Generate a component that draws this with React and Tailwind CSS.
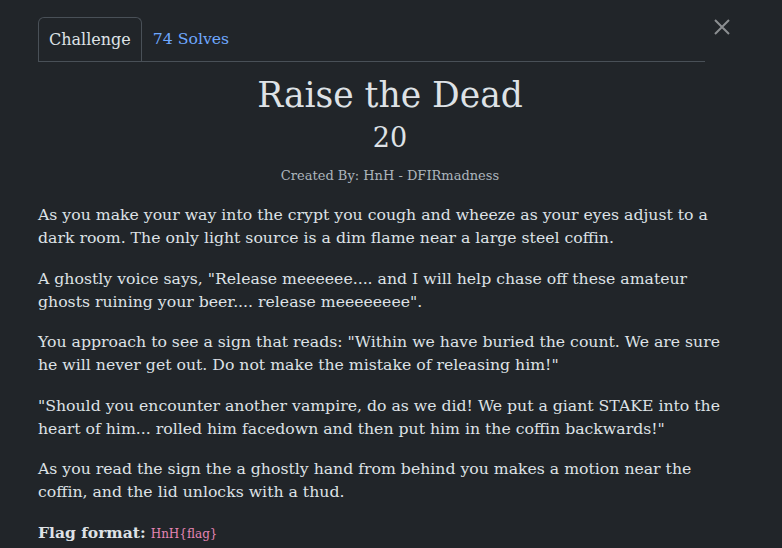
export default function App() {
  return (
    <div className="w-[782px] h-[548px] overflow-hidden bg-[#212529] text-[#dee2e6] px-[38px] pt-[17px] font-['DejaVu_Serif',serif]">
      <div className="flex items-start">
        <div className="w-[667px] flex border-b border-[#495057]">
          <div className="h-[44px] -mb-px px-[10px] flex items-center border border-b-0 border-[#495057] rounded-t-[6px] bg-[#212529] text-[16px] text-[#dee2e6]">
            Challenge
          </div>
          <div className="h-[44px] px-[11px] flex items-center text-[15.7px] text-[#6ea8fe]">
            74 Solves
          </div>
        </div>
        <button className="ml-[9px] mt-[2px] w-[16px] h-[16px] text-[#8b8e91]" aria-label="Close">
          <svg width="16" height="16" viewBox="0 0 16 16" fill="none" stroke="currentColor" strokeWidth="2">
            <path d="M1 1 L15 15 M15 1 L1 15" />
          </svg>
        </button>
      </div>
      <div className="w-[704px]">
        <h1 className="mt-[14px] text-center text-[34.5px] leading-[38px] text-[#dee2e6]">Raise the Dead</h1>
        <div className="mt-[8px] text-center text-[27px] leading-[32px] text-[#dee2e6]">20</div>
        <div className="mt-[13px] text-center text-[13px] leading-[18px] text-[#adb5bd]">
          Created By: HnH - DFIRmadness
        </div>
        <div className="mt-[18px] text-[15.7px] leading-[23px] text-[#dee2e6] whitespace-nowrap">
          <p className="mb-[17.6px]">
            As you make your way into the crypt you cough and wheeze as your eyes adjust to a<br />
            dark room. The only light source is a dim flame near a large steel coffin.
          </p>
          <p className="mb-[17.6px]">
            A ghostly voice says, "Release meeeeee.... and I will help chase off these amateur<br />
            ghosts ruining your beer.... release meeeeeeee".
          </p>
          <p className="mb-[17.6px]">
            You approach to see a sign that reads: "Within we have buried the count. We are sure<br />
            he will never get out. Do not make the mistake of releasing him!"
          </p>
          <p className="mb-[17.6px]">
            "Should you encounter another vampire, do as we did! We put a giant STAKE into the<br />
            heart of him... rolled him facedown and then put him in the coffin backwards!"
          </p>
          <p className="mb-[17.6px]">
            As you read the sign the a ghostly hand from behind you makes a motion near the<br />
            coffin, and the lid unlocks with a thud.
          </p>
          <p>
            <strong className="font-bold text-[15.5px]">Flag format:</strong>{' '}
            <code className="text-[12px] text-[#e685b5] font-['DejaVu_Serif',serif]">HnH{'{flag}'}</code>
          </p>
        </div>
      </div>
    </div>
  );
}
